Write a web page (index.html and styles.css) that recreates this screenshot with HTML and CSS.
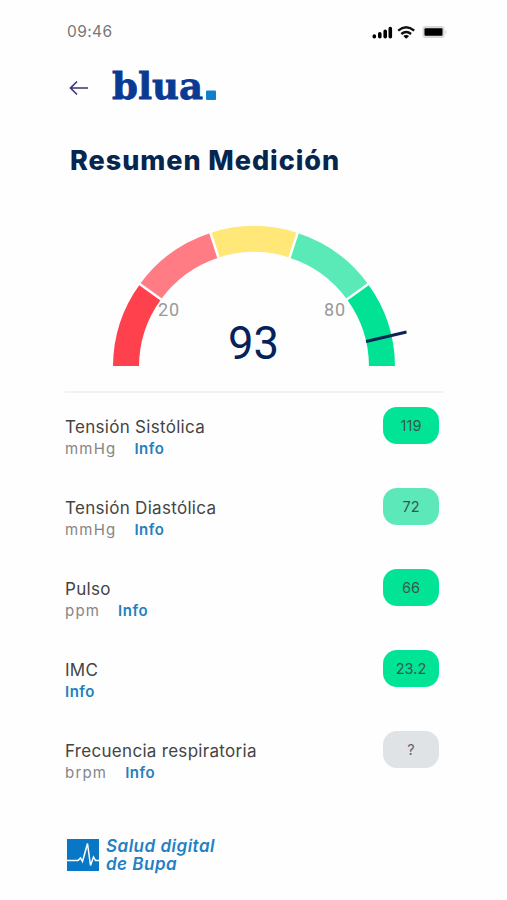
FILE: index.html
```html
<!DOCTYPE html>
<html lang="es">
<head>
    <meta charset="UTF-8">
    <meta name="viewport" content="width=device-width, initial-scale=1.0">
    <title>Resumen Medición</title>
    <link rel="stylesheet" href="styles.css">
</head>
<body>
    <div class="screen">
        <div class="status-bar">
            <span class="time">09:46</span>
            <svg class="status-icons" width="76" height="16" viewBox="0 0 76 16">
                <g stroke="#000" stroke-width="3.6" stroke-linecap="round">
                    <path d="M3.3 12.8v-.8M8.8 12.8v-3M14.2 12.8v-5.5M19.3 12.8V4.5"/>
                </g>
                <g fill="none" stroke="#111" stroke-width="2.4">
                    <path d="M27.2 6.6q8-6.8 16 0M30.3 10q4.9-4 9.8 0"/>
                </g>
                <path d="M32.3 12q2.9-2.2 5.8 0L35.2 14.8z"/>
                <rect x="51.500" y="2" width="22" height="12" rx="3" fill="#d8d8d8"/>
                <path d="M74.500 5.500q2 2.500 0 5z" fill="#ccc"/>
                <rect x="53.500" y="4.300" width="18" height="7.400" rx="1" fill="#000"/>
            </svg>
        </div>

        <div class="header">
            <svg class="back" width="20" height="16" viewBox="0 0 20 16">
                <path d="M19 8H1.500M8 1.500L1.500 8L8 14.500" fill="none" stroke="#3a3474" stroke-width="1.600"/>
            </svg>
            <svg class="brand" width="106" height="46" viewBox="0 -5 106 46">
                <text class="brand-text" x="0" y="31" textLength="91" lengthAdjust="spacingAndGlyphs">blua</text>
                <rect x="94" y="22.500" width="10" height="9.500" rx="1" fill="#0f80cc"/>
            </svg>
        </div>

        <h1 class="title">Resumen Medición</h1>

        <svg class="gauge" width="300" height="142" viewBox="0 0 300 142">
            <g fill="none" stroke-width="26">
                <path d="M14 141A128 128 0 0 1 38.4 66.8" stroke="#ff414d"/>
                <path d="M38.4 66.8A128 128 0 0 1 102.4 20.3" stroke="#ff7c84"/>
                <path d="M102.4 20.3A128 128 0 0 1 181.6 20.3" stroke="#ffe778"/>
                <path d="M181.6 20.3A128 128 0 0 1 245.6 66.8" stroke="#5aeab7"/>
                <path d="M245.6 66.8A128 128 0 0 1 270 141" stroke="#02e295"/>
            </g>
            <path d="M50.6 75.6L26.3 57.9M107.1 34.5L97.8 6M176.9 34.5L186.2 6M233.4 75.6L257.7 57.9" stroke="#fff" stroke-width="2.500"/>
            <path d="M254 116.500L294.500 107" stroke="#0a2455" stroke-width="3"/>
            <text class="tick" x="46" y="91" textLength="21">20</text>
            <text class="tick" x="212" y="91" textLength="21">80</text>
            <text class="score" x="116" y="133.500" textLength="51" lengthAdjust="spacingAndGlyphs">93</text>
        </svg>

        <div class="results">
            <div class="row">
                <div>
                    <div class="name">Tensión Sistólica</div>
                    <div class="detail"><span class="unit">mmHg</span><span class="info">Info</span></div>
                </div>
                <div class="badge good">119</div>
            </div>
            <div class="row">
                <div>
                    <div class="name">Tensión Diastólica</div>
                    <div class="detail"><span class="unit">mmHg</span><span class="info">Info</span></div>
                </div>
                <div class="badge fair">72</div>
            </div>
            <div class="row">
                <div>
                    <div class="name">Pulso</div>
                    <div class="detail"><span class="unit">ppm</span><span class="info">Info</span></div>
                </div>
                <div class="badge good">66</div>
            </div>
            <div class="row">
                <div>
                    <div class="name">IMC</div>
                    <div class="detail"><span class="info">Info</span></div>
                </div>
                <div class="badge good">23.2</div>
            </div>
            <div class="row">
                <div>
                    <div class="name">Frecuencia respiratoria</div>
                    <div class="detail"><span class="unit">brpm</span><span class="info">Info</span></div>
                </div>
                <div class="badge unknown">?</div>
            </div>
        </div>

        <div class="footer">
            <svg width="32" height="32" viewBox="0 0 32 32">
                <rect width="32" height="32" fill="#0878c6"/>
                <path d="M0 21.500h11l2.500-2.500 2 3.500L20.500 4.500l3 22 3-8.500 2 3.500H32" fill="none" stroke="#fff" stroke-width="1.500"/>
            </svg>
            <div class="slogan">
                <div>Salud digital</div>
                <div>de Bupa</div>
            </div>
        </div>
    </div>
</body>
</html>
```
FILE: styles.css
```css
* {
    margin: 0;
    padding: 0;
    box-sizing: border-box;
}

body {
    background-color: #fefefe;
    font-family: Inter, 'Liberation Sans', sans-serif;
}

.screen {
    width: 507px;
    height: 900px;
    padding: 21px 63px 0 65px;
    overflow: hidden;
}

.status-bar {
    display: flex;
    justify-content: space-between;
    height: 20px;
    padding-left: 2px;
}

.time {
    font-size: 15.5px;
    line-height: 21px;
    letter-spacing: 0.4px;
    color: #777;
}

.status-icons {
    margin-top: 3px;
    margin-right: -3px;
}

.header {
    display: flex;
    align-items: center;
    height: 36px;
    margin-top: 27px;
    padding-left: 4px;
}

.back {
    margin-top: 4px;
}

.brand {
    margin-left: 23px;
}

.brand-text {
    font-family: 'DejaVu Serif', serif;
    font-size: 37px;
    font-weight: bold;
    fill: #0a3a92;
    stroke: #0a3a92;
    stroke-width: 0.8px;
}

.title {
    height: 34px;
    margin-top: 40px;
    padding-left: 5px;
    font-size: 27px;
    line-height: 34px;
    font-weight: 800;
    letter-spacing: 0.95px;
    color: #07264f;
    white-space: nowrap;
}

.gauge {
    display: block;
    margin: 47px 0 0 47px;
    overflow: visible;
}

.tick {
    font-family: Roboto, sans-serif;
    font-size: 18px;
    fill: #999;
}

.score {
    font-family: Roboto, sans-serif;
    font-size: 46px;
    fill: #07225a;
}

.results {
    margin-top: 24px;
    border-top: 2px solid #f2f2f2;
    padding-top: 14px;
}

.row {
    display: flex;
    justify-content: space-between;
    height: 81px;
    padding-right: 5px;
}

.name {
    margin-top: 9px;
    font-size: 17px;
    line-height: 22px;
    letter-spacing: 0.3px;
    color: #444;
}

.detail {
    display: flex;
    gap: 18px;
    font-size: 15px;
    line-height: 22px;
}

.unit {
    letter-spacing: 1.2px;
    color: #858585;
}

.info {
    font-weight: 600;
    letter-spacing: 0.5px;
    color: #2380bb;
}

.badge {
    width: 56px;
    height: 37px;
    border-radius: 14px;
    text-align: center;
    font-size: 14.5px;
    line-height: 37px;
    color: #345a50;
}

.good {
    background-color: #02e495;
}

.fair {
    background-color: #5de8b9;
}

.unknown {
    background-color: #dfe3e6;
    color: #666;
}

.footer {
    display: flex;
    gap: 7px;
    margin-top: 27px;
    padding-left: 2px;
}

.slogan {
    margin-top: -2px;
    font-size: 17px;
    line-height: 18px;
    font-weight: 600;
    font-style: italic;
    letter-spacing: 0.5px;
    color: #2380c3;
}
```
